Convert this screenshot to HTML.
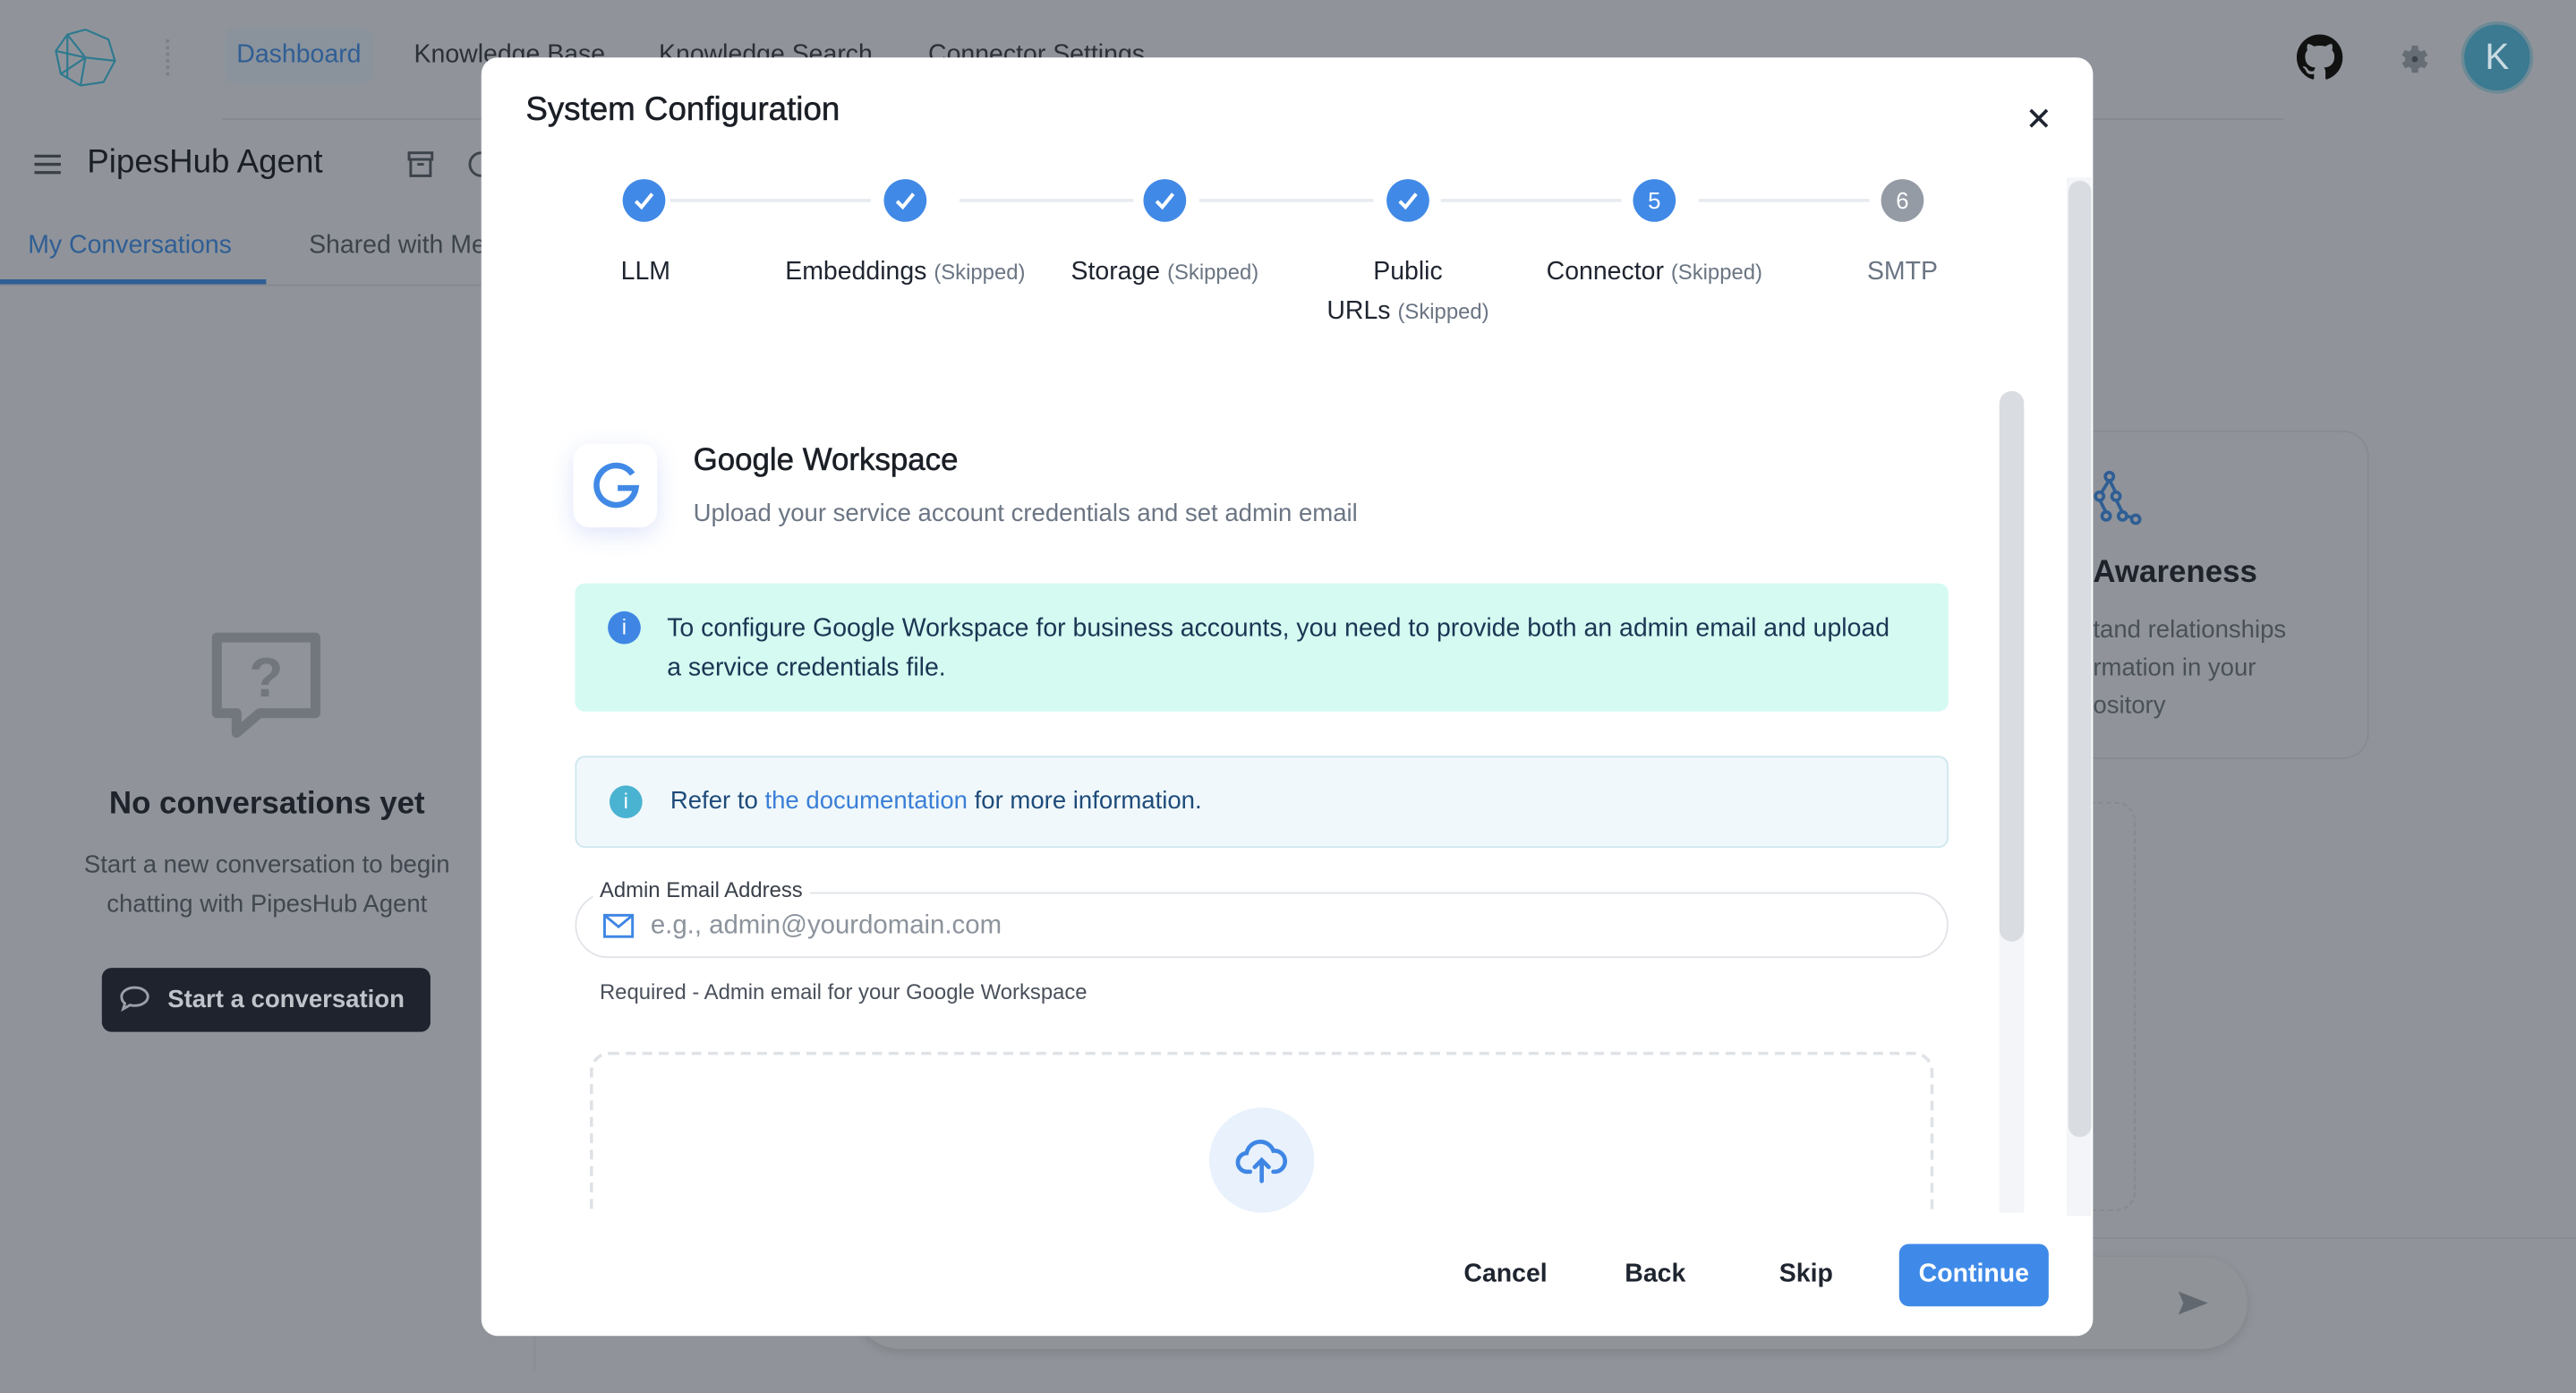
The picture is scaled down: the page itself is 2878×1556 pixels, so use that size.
<!DOCTYPE html>
<html><head><meta charset="utf-8">
<style>
*{box-sizing:border-box;margin:0;padding:0}
html,body{width:2878px;height:1556px;overflow:hidden;background:#909499}
#w{position:absolute;left:0;top:0;width:1568px;height:848px;transform:scale(1.83546);transform-origin:0 0;font-family:"Liberation Sans",sans-serif;color:#1f2530}
.a{position:absolute}
.bg{background:#90949a;width:1568px;height:848px;position:absolute}
.t{position:absolute;white-space:nowrap}
.step{position:absolute;top:109px;width:26px;height:26px;border-radius:50%;background:#4189e6;color:#fff;font-size:14px;text-align:center;line-height:26px}
.step svg{position:absolute;left:6px;top:6px}
.ln{position:absolute;top:121px;height:2px;background:#e7eaee}
.lab{position:absolute;top:154px;font-size:15.5px;color:#1f2530;text-align:center;white-space:nowrap;line-height:24px}
.sk{font-size:13px;color:#6b7583}
.btn{position:absolute;top:767px;font-size:15.5px;font-weight:bold;color:#1f2530}
</style></head><body><div id="w">
<div class="bg"></div>
<svg class="a" style="left:33px;top:17px" width="38" height="36" viewBox="0 0 38 36" fill="none" stroke="#2f7a8f" stroke-width="1.2"><path d="M19 1 L33 7 L37 20 L30 33 L16 35 L4 28 L1 14 L8 4 Z M8 4 L19 18 L4 28 M19 18 L37 20 M19 18 L16 35 M1 14 L19 18 M8 4 L8 31"/></svg>
<div class="a" style="left:101px;top:24px;width:2px;height:22px;border-left:2px dotted #7b8088"></div>
<div class="a" style="left:137px;top:17px;width:90px;height:34px;border-radius:6px;background:#8a929c"></div>
<div class="t" style="left:144px;top:25px;font-size:15.5px;color:#2f5e94">Dashboard</div>
<div class="t" style="left:252px;top:25px;font-size:15.5px;color:#2b2f36">Knowledge Base</div>
<div class="t" style="left:401px;top:25px;font-size:15.5px;color:#2b2f36">Knowledge Search</div>
<div class="t" style="left:565px;top:25px;font-size:15.5px;color:#2b2f36">Connector Settings</div>
<div class="a" style="left:135px;top:72px;width:1255px;height:1px;background:#868a90"></div>
<svg class="a" style="left:1398px;top:21px" width="28" height="28" viewBox="0 0 16 16"><path fill="#111" d="M8 0C3.58 0 0 3.58 0 8c0 3.54 2.290 6.53 5.47 7.59.4.07.55-.17.55-.38 0-.19-.01-.82-.01-1.49-2.01.37-2.53-.49-2.690-.94-.09-.23-.48-.94-.82-1.13-.28-.15-.68-.52-.01-.53.63-.01 1.08.58 1.23.82.72 1.21 1.87.87 2.33.66.07-.52.28-.87.51-1.07-1.78-.2-3.64-.89-3.64-3.95 0-.87.31-1.59.82-2.15-.08-.2-.36-1.02.08-2.12 0 0 .67-.21 2.2.82.64-.18 1.32-.27 2-.27.68 0 1.36.09 2 .27 1.53-1.04 2.2-.82 2.2-.82.44 1.1.16 1.92.08 2.12.51.56.82 1.27.82 2.15 0 3.07-1.87 3.75-3.65 3.95.29.25.54.73.54 1.48 0 1.07-.01 1.93-.01 2.2 0 .21.15.46.55.38A8.013 8.013 0 0016 8c0-4.42-3.58-8-8-8z"/></svg>
<svg class="a" style="left:1458px;top:25px" width="22" height="22" viewBox="0 0 24 24"><path fill="#676d75" d="M19.4 13a7.5 7.5 0 000-2l2.1-1.6-2-3.5-2.5 1a7 7 0 00-1.7-1L15 3h-4l-.4 2.9a7 7 0 00-1.7 1l-2.5-1-2 3.5L6.6 11a7.5 7.5 0 000 2l-2.1 1.6 2 3.5 2.5-1a7 7 0 001.7 1L11 21h4l.4-2.9a7 7 0 001.7-1l2.5 1 2-3.5z"/><circle cx="13" cy="12" r="2" fill="#3e434a"/></svg>
<div class="a" style="left:1498px;top:13px;width:44px;height:44px;border-radius:50%;border:2px solid #6d8a96;background:#3b7a91;color:#c9dbe2;font-size:22px;text-align:center;line-height:40px">K</div>
<svg class="a" style="left:20px;top:93px" width="18" height="14"><path d="M1 2h16M1 7h16M1 12h16" stroke="#3a3f47" stroke-width="1.8"/></svg>
<div class="t" style="left:53px;top:88px;font-size:20px;color:#1a1e25">PipesHub Agent</div>
<svg class="a" style="left:247px;top:91px" width="18" height="18" fill="none" stroke="#3d434b" stroke-width="1.6"><rect x="2" y="2" width="14" height="4"/><path d="M3 6v10h12V6M7 9h4"/></svg>
<svg class="a" style="left:284px;top:91px" width="12" height="18" fill="none" stroke="#3d434b" stroke-width="1.6"><path d="M9 2a7 7 0 100 14"/></svg>
<div class="t" style="left:17px;top:141px;font-size:15.5px;color:#2f5e94">My Conversations</div>
<div class="a" style="left:0;top:170px;width:162px;height:3px;background:#2f5e94"></div>
<div class="a" style="left:0;top:173px;width:300px;height:1px;background:#868a90"></div>
<div class="t" style="left:188px;top:141px;font-size:15.5px;color:#3d434b">Shared with Me</div>
<svg class="a" style="left:128px;top:384px" width="68" height="68" viewBox="0 0 68 68" fill="none"><path d="M4 4h60v46H30L16 62V50H4z" stroke="#72777e" stroke-width="6" stroke-linejoin="round"/><text x="34" y="40" font-size="34" font-weight="bold" fill="#72777e" text-anchor="middle" font-family="Liberation Sans">?</text></svg>
<div class="t" style="left:0;width:325px;text-align:center;top:479px;font-size:19px;font-weight:bold;color:#1e232b">No conversations yet</div>
<div class="t" style="left:0;width:325px;text-align:center;top:515px;font-size:15px;color:#41474f;line-height:24px">Start a new conversation to begin<br>chatting with PipesHub Agent</div>
<div class="a" style="left:62px;top:589px;width:200px;height:39px;border-radius:6px;background:#1e232d"></div>
<svg class="a" style="left:72px;top:599px" width="20" height="18" fill="none" stroke="#9aa0a8" stroke-width="1.6"><path d="M10 2c4.5 0 8 2.5 8 5.5S14.5 13 10 13c-1 0-2-.1-2.8-.4L3 15l1-3.3C2.8 10.7 2 9.2 2 7.5 2 4.5 5.5 2 10 2z"/></svg>
<div class="t" style="left:102px;top:600px;font-size:15px;font-weight:bold;color:#c0c4ca">Start a conversation</div>
<div class="a" style="left:325px;top:174px;width:1px;height:660px;background:#898d93"></div>
<div class="a" style="left:1230px;top:262px;width:212px;height:200px;border-radius:16px;border:1px solid #878b91"></div>
<svg class="a" style="left:1272px;top:286px" width="32" height="34" fill="none" stroke="#2f5e94" stroke-width="2"><circle cx="12" cy="4" r="2.5"/><circle cx="6" cy="16" r="2.5"/><circle cx="16" cy="16" r="2.5"/><circle cx="10" cy="28" r="2.5"/><circle cx="20" cy="28" r="2.5"/><circle cx="28" cy="30" r="2.5"/><path d="M12 6l-5 8M12 6l4 8M6 18l4 8M16 18l4 8M22 28l4 1"/></svg>
<div class="t" style="left:1274px;top:338px;font-size:19px;font-weight:bold;color:#1e232b">Awareness</div>
<div class="t" style="left:1274px;top:372px;font-size:15px;color:#4a5058;line-height:23px">tand relationships<br>rmation in your<br>ository</div>
<div class="a" style="left:1230px;top:488px;width:70px;height:249px;border:1px dashed #85898f;border-radius:12px"></div>
<div class="a" style="left:325px;top:753px;width:1243px;height:1px;background:#878b91"></div>
<div class="a" style="left:520px;top:765px;width:848px;height:56px;border-radius:28px;background:#909499;box-shadow:0 2px 6px rgba(0,0,0,.12)"></div>
<svg class="a" style="left:1325px;top:785px" width="20" height="16"><path d="M1 1l18 7-18 7 3-7z" fill="#626870"/></svg>

<div class="a" style="left:293px;top:35px;width:981px;height:778px;border-radius:10px;background:#fff;overflow:hidden">
  <div class="t" style="left:27px;top:21px;font-size:20px;color:#1a1e25;-webkit-text-stroke:0.3px #1a1e25">System Configuration</div>
  <svg class="a" style="left:942px;top:31px" width="12" height="12"><path d="M1 1l10 10M11 1L1 11" stroke="#1f2530" stroke-width="2"/></svg>
  <div class="a" style="left:965px;top:73px;width:15px;height:632px;background:#f4f5f8"></div>
  <div class="a" style="left:966px;top:75px;width:14px;height:582px;border-radius:7px;background:#d9dce1"></div>
</div>
<div class="ln" style="left:408px;width:122px"></div>
<div class="ln" style="left:584px;width:106px"></div>
<div class="ln" style="left:730px;width:106px"></div>
<div class="ln" style="left:877px;width:110px"></div>
<div class="ln" style="left:1034px;width:104px"></div>
<div class="step" style="left:379px"><svg width="14" height="14"><path d="M2 7.5l3.5 3.5L12 3" fill="none" stroke="#fff" stroke-width="2.2"/></svg></div>
<div class="step" style="left:538px"><svg width="14" height="14"><path d="M2 7.5l3.5 3.5L12 3" fill="none" stroke="#fff" stroke-width="2.2"/></svg></div>
<div class="step" style="left:696px"><svg width="14" height="14"><path d="M2 7.5l3.5 3.5L12 3" fill="none" stroke="#fff" stroke-width="2.2"/></svg></div>
<div class="step" style="left:844px"><svg width="14" height="14"><path d="M2 7.5l3.5 3.5L12 3" fill="none" stroke="#fff" stroke-width="2.2"/></svg></div>
<div class="step" style="left:994px">5</div>
<div class="step" style="left:1145px;background:#949ba5">6</div>
<div class="lab" style="left:343px;width:100px">LLM</div>
<div class="lab" style="left:471px;width:160px">Embeddings <span class="sk">(Skipped)</span></div>
<div class="lab" style="left:639px;width:140px">Storage <span class="sk">(Skipped)</span></div>
<div class="lab" style="left:797px;width:120px">Public<br>URLs <span class="sk">(Skipped)</span></div>
<div class="lab" style="left:932px;width:150px">Connector <span class="sk">(Skipped)</span></div>
<div class="lab" style="left:1108px;width:100px;color:#6b7583">SMTP</div>

<div class="a" style="left:1217px;top:238px;width:15px;height:500px;background:#f4f5f8;border-radius:8px 8px 0 0"></div>
<div class="a" style="left:1217px;top:238px;width:15px;height:335px;border-radius:8px;background:#d9dce1"></div>

<div class="a" style="left:349px;top:270px;width:51px;height:51px;border-radius:10px;background:#fff;box-shadow:0 4px 14px rgba(80,110,230,.18)"></div>
<svg class="a" style="left:360px;top:281px" width="30" height="30" viewBox="0 0 30 30" fill="none" stroke="#4189e6" stroke-width="3.6"><path d="M25 7.5A12 12 0 1027 16H16"/></svg>
<div class="t" style="left:422px;top:270px;font-size:19px;color:#1a1e25;-webkit-text-stroke:0.3px #1a1e25">Google Workspace</div>
<div class="t" style="left:422px;top:304px;font-size:15px;color:#6b7583">Upload your service account credentials and set admin email</div>

<div class="a" style="left:350px;top:355px;width:836px;height:78px;border-radius:6px;background:#d4faf2"></div>
<div class="a" style="left:370px;top:372px;width:20px;height:20px;border-radius:50%;background:#3f86e4;color:#fff;font-size:13px;text-align:center;line-height:20px">i</div>
<div class="t" style="left:406px;top:371px;font-size:15.5px;color:#1b3553;line-height:24px">To configure Google Workspace for business accounts, you need to provide both an admin email and upload<br>a service credentials file.</div>

<div class="a" style="left:350px;top:460px;width:836px;height:56px;border-radius:6px;background:#f0f8fb;border:1px solid #cfe7ee"></div>
<div class="a" style="left:371px;top:478px;width:20px;height:20px;border-radius:50%;background:#4ab3d1;color:#fff;font-size:13px;text-align:center;line-height:20px">i</div>
<div class="t" style="left:408px;top:479px;font-size:15px;color:#1e4b7a">Refer to <span style="color:#3a7fd6">the documentation</span> for more information.</div>

<div class="a" style="left:350px;top:543px;width:836px;height:40px;border-radius:20px;border:1px solid #e1e4e8"></div>
<div class="t" style="left:361px;top:534px;font-size:13px;color:#3a404a;background:#fff;padding:0 4px">Admin Email Address</div>
<svg class="a" style="left:367px;top:556px" width="19" height="15" fill="none" stroke="#3f86e4" stroke-width="1.6"><rect x="1" y="1" width="17" height="13"/><path d="M1 1l8.5 7L18 1"/></svg>
<div class="t" style="left:396px;top:555px;font-size:16px;color:#8c939c">e.g., admin@yourdomain.com</div>
<div class="t" style="left:365px;top:596px;font-size:13px;color:#4a515b">Required - Admin email for your Google Workspace</div>

<div class="a" style="left:359px;top:640px;width:818px;height:98px;overflow:hidden"><div style="width:818px;height:200px;border:2px dashed #dfe2e6;border-radius:12px"></div></div>
<div class="a" style="left:736px;top:674px;width:64px;height:64px;border-radius:50%;background:#e8f1fc"></div>
<svg class="a" style="left:751px;top:689px" width="34" height="34" viewBox="0 0 24 24" fill="none" stroke="#3f86e4" stroke-width="1.8" stroke-linecap="round"><path d="M7 17H6a4 4 0 01-.5-8A6 6 0 0117 8a4.5 4.5 0 011 9h-1"/><path d="M12 21v-9M9 15l3-3 3 3"/></svg>

<div class="btn" style="left:891px">Cancel</div>
<div class="btn" style="left:989px">Back</div>
<div class="btn" style="left:1083px">Skip</div>
<div class="a" style="left:1156px;top:757px;width:91px;height:38px;border-radius:6px;background:#3f8ae8;color:#fff;font-size:15.5px;font-weight:bold;text-align:center;line-height:38px">Continue</div>
</div></body></html>
